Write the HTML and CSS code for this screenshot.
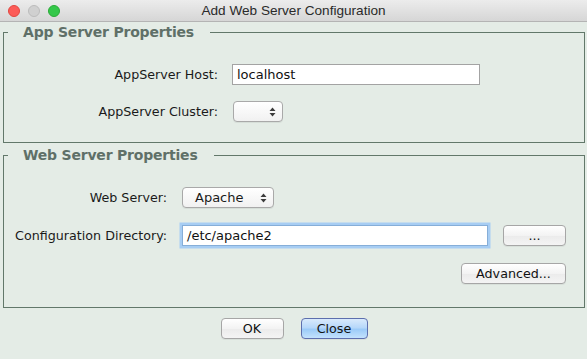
FILE: index.html
```html
<!DOCTYPE html>
<html>
<head>
<meta charset="utf-8">
<link rel="stylesheet" href="styles.css">
</head>
<body>
<div class="window">
  <div class="titlebar">
    <div class="lights">
      <span class="light red"></span>
      <span class="light gray"></span>
      <span class="light green"></span>
    </div>
    <div class="title">Add Web Server Configuration</div>
    <div></div>
  </div>
  <div class="content">
    <fieldset class="group">
      <legend>App Server Properties</legend>
      <div class="form form-app">
        <label class="lbl">AppServer Host:</label>
        <div class="input host">localhost</div>
        <label class="lbl">AppServer Cluster:</label>
        <div class="select cluster">
          <span class="sel-text"></span>
          <svg class="arrows" width="7" height="10" viewBox="0 0 7 10"><path d="M3.5 0.5 L6.5 4 L0.5 4 Z M3.5 9.5 L6.5 6 L0.5 6 Z" fill="#3c3c3c"/></svg>
        </div>
      </div>
    </fieldset>
    <fieldset class="group group-web">
      <legend>Web Server Properties</legend>
      <div class="form form-web">
        <label class="lbl">Web Server:</label>
        <div class="select server">
          <span class="sel-text">Apache</span>
          <svg class="arrows" width="7" height="10" viewBox="0 0 7 10"><path d="M3.5 0.5 L6.5 4 L0.5 4 Z M3.5 9.5 L6.5 6 L0.5 6 Z" fill="#3c3c3c"/></svg>
        </div>
        <div></div>
        <label class="lbl">Configuration Directory:</label>
        <div class="input focused">/etc/apache2</div>
        <button class="btn browse">...</button>
        <button class="btn advanced">Advanced...</button>
      </div>
    </fieldset>
    <div class="actions">
      <button class="btn ok">OK</button>
      <button class="btn primary close">Close</button>
    </div>
  </div>
</div>
</body>
</html>
```
FILE: styles.css
```css
html, body {
  margin: 0;
  padding: 0;
}
body {
  width: 587px;
  height: 359px;
  overflow: hidden;
  background: #e4ece6;
  font-family: "DejaVu Sans", sans-serif;
  font-size: 12.7px;
  color: #1a1a1a;
}
.window {
  display: flex;
  flex-direction: column;
  height: 359px;
}
.titlebar {
  height: 21px;
  border-bottom: 1px solid #b4b4b4;
  background: linear-gradient(#ececec, #d6d6d6);
  display: grid;
  grid-template-columns: 1fr auto 1fr;
  align-items: center;
}
.lights {
  display: flex;
  gap: 8px;
  padding-left: 8px;
}
.light {
  width: 12px;
  height: 12px;
  border-radius: 50%;
  border: 0.5px solid;
  box-sizing: border-box;
}
.light.red { background: #fc5b57; border-color: #e2463f; }
.light.gray { background: #d0d0d0; border-color: #bcbcbc; }
.light.green { background: #34c84a; border-color: #2aab37; }
.title {
  font-family: "Liberation Sans", Arial, sans-serif;
  font-size: 13.6px;
  color: #2a2a2a;
}
.content {
  display: flex;
  flex-direction: column;
}
.group {
  margin: 1px 2px 0 3px;
  padding: 0;
  border: 1px solid #62786a;
  min-width: 0;
}
.group-web {
  margin-top: 3px;
}
legend {
  margin-left: 4px;
  padding: 0 16px 0 15px;
  font-weight: bold;
  font-size: 14px;
  letter-spacing: -0.2px;
  line-height: 18px;
  color: #5f7068;
}
.form {
  display: grid;
  align-items: center;
}
.form-app {
  grid-template-columns: 214px 248px;
  column-gap: 14px;
  row-gap: 16px;
  padding: 23px 0 20px;
}
.form-web {
  grid-template-columns: 163px 306px 63px;
  column-gap: 15px;
  row-gap: 17px;
  padding: 23px 0 23px;
}
.lbl {
  text-align: right;
}
.input {
  height: 21px;
  box-sizing: border-box;
  border: 1px solid #a3a3a3;
  background: #fff;
  padding: 0 4px;
  line-height: 19px;
  font-size: 13px;
  color: #111;
}
.input.focused {
  border-color: #86aed8;
  box-shadow: 0 0 0 2.5px #a7cdf3;
}
.select {
  height: 21px;
  box-sizing: border-box;
  border: 1px solid #a9a9a9;
  border-radius: 4px;
  background: linear-gradient(#ffffff, #f1f1f1);
  box-shadow: 0 1px 0 rgba(0,0,0,0.06);
  display: flex;
  align-items: center;
  justify-content: space-between;
  padding: 0 6px 0 12px;
  font-size: 13px;
}
.select.cluster {
  width: 50px;
  margin-left: 1px;
}
.select.server {
  width: 92px;
}
.arrows {
  display: block;
}
.btn {
  font-family: "DejaVu Sans", sans-serif;
  font-size: 12.7px;
  color: #111;
  height: 21px;
  box-sizing: border-box;
  border: 1px solid #a6a6a6;
  border-radius: 4px;
  background: linear-gradient(#ffffff, #f3f3f3 50%, #ebebeb 51%, #f4f4f4);
  box-shadow: 0 1px 0 rgba(0,0,0,0.05);
  padding: 0;
  line-height: 19px;
}
.browse {
  width: 63px;
}
.advanced {
  grid-column: 1 / -1;
  justify-self: end;
  width: 105px;
}
.actions {
  display: flex;
  justify-content: center;
  gap: 17px;
  margin-top: 10px;
  padding-left: 1px;
}
.ok {
  width: 63px;
}
.close {
  width: 67px;
}
.primary {
  border-color: #5d6fae;
  background: linear-gradient(#d9eafc, #b7d8fa 45%, #9ccbf8 55%, #c3e2fd);
}
```
